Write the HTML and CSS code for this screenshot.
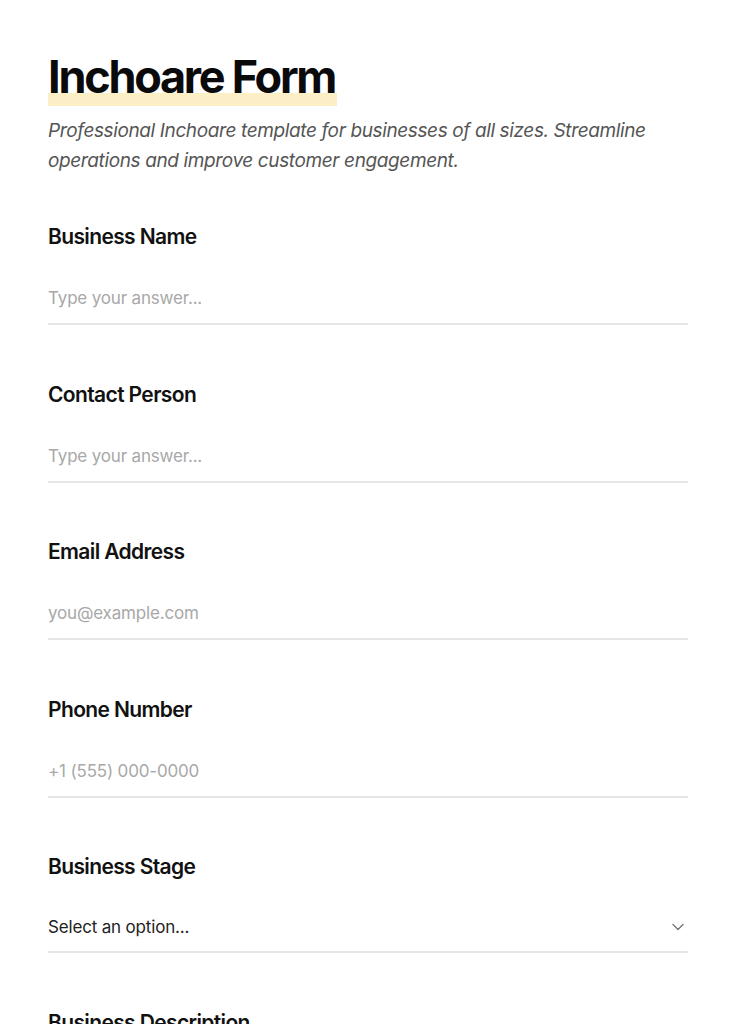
FILE: index.html
```html
<!DOCTYPE html>
<html lang="en">
<head>
<meta charset="utf-8">
<title>Inchoare Form</title>
<link rel="stylesheet" href="styles.css">
</head>
<body>
<main class="page">
  <header class="intro">
    <h1 class="title">Inchoare Form</h1>
    <p class="subtitle">Professional Inchoare template for businesses of all sizes. Streamline operations and improve customer engagement.</p>
  </header>
  <form class="form">
    <div class="field">
      <label class="label" for="f1">Business Name</label>
      <input class="input" id="f1" type="text" placeholder="Type your answer...">
    </div>
    <div class="field">
      <label class="label" for="f2">Contact Person</label>
      <input class="input" id="f2" type="text" placeholder="Type your answer...">
    </div>
    <div class="field">
      <label class="label" for="f3">Email Address</label>
      <input class="input" id="f3" type="email" placeholder="you@example.com">
    </div>
    <div class="field">
      <label class="label" for="f4">Phone Number</label>
      <input class="input" id="f4" type="tel" placeholder="+1 (555) 000-0000">
    </div>
    <div class="field">
      <label class="label" for="f5">Business Stage</label>
      <div class="select-wrap">
        <select class="input select" id="f5">
          <option>Select an option...</option>
          <option>Idea</option>
          <option>Startup</option>
          <option>Growth</option>
          <option>Established</option>
        </select>
        <svg class="chevron" width="12" height="8" viewBox="0 0 12 8" aria-hidden="true"><path d="M1 1.5l5 5 5-5" fill="none" stroke="#777" stroke-width="1.4" stroke-linecap="round" stroke-linejoin="round"/></svg>
      </div>
    </div>
    <div class="field">
      <label class="label" for="f6">Business Description</label>
      <textarea class="input" id="f6" rows="3" placeholder="Type your answer..."></textarea>
    </div>
  </form>
</main>
</body>
</html>
```
FILE: styles.css
```css
* { box-sizing: border-box; }
html, body { margin: 0; padding: 0; background: #fff; }
body {
  font-family: Inter, "Noto Sans", sans-serif;
  color: #111;
}
.page {
  padding: 48px 48px 0 48px;
}
.intro {
  display: flex;
  flex-direction: column;
  align-items: flex-start;
}
.title {
  margin: 0;
  font-size: 45px;
  font-weight: 700;
  letter-spacing: -0.05em;
  line-height: 58px;
  color: #0a0a0a;
  padding-right: 2px;
  background: linear-gradient(to bottom, transparent 0, transparent 45px, #fcefc5 45px, #fcefc5 58px);
}
.subtitle {
  margin: 10px 0 0 0;
  font-size: 19px;
  font-style: italic;
  line-height: 30px;
  color: #555;
  letter-spacing: -0.02em;
}
.form {
  display: flex;
  flex-direction: column;
  gap: 55.5px;
  margin-top: 47px;
}
.field {
  display: flex;
  flex-direction: column;
  gap: 24px;
}
.label {
  font-size: 21px;
  font-weight: 600;
  line-height: 28px;
  letter-spacing: -0.03em;
  color: #111;
}
.input {
  width: 100%;
  border: none;
  border-bottom: 2px solid #e6e6e6;
  padding: 12px 0 14px 0;
  font-family: inherit;
  font-size: 17px;
  line-height: 22px;
  letter-spacing: -0.01em;
  color: #222;
  background: transparent;
  outline: none;
  border-radius: 0;
}
.input::placeholder { color: #a8a8a8; }
.select-wrap { position: relative; }
.select {
  appearance: none;
  -webkit-appearance: none;
  color: #222;
  height: 48px;
  padding: 11px 0 13px 0;
}
.chevron {
  position: absolute;
  right: 4px;
  top: 18px;
  pointer-events: none;
}
textarea.input { resize: none; }
```
